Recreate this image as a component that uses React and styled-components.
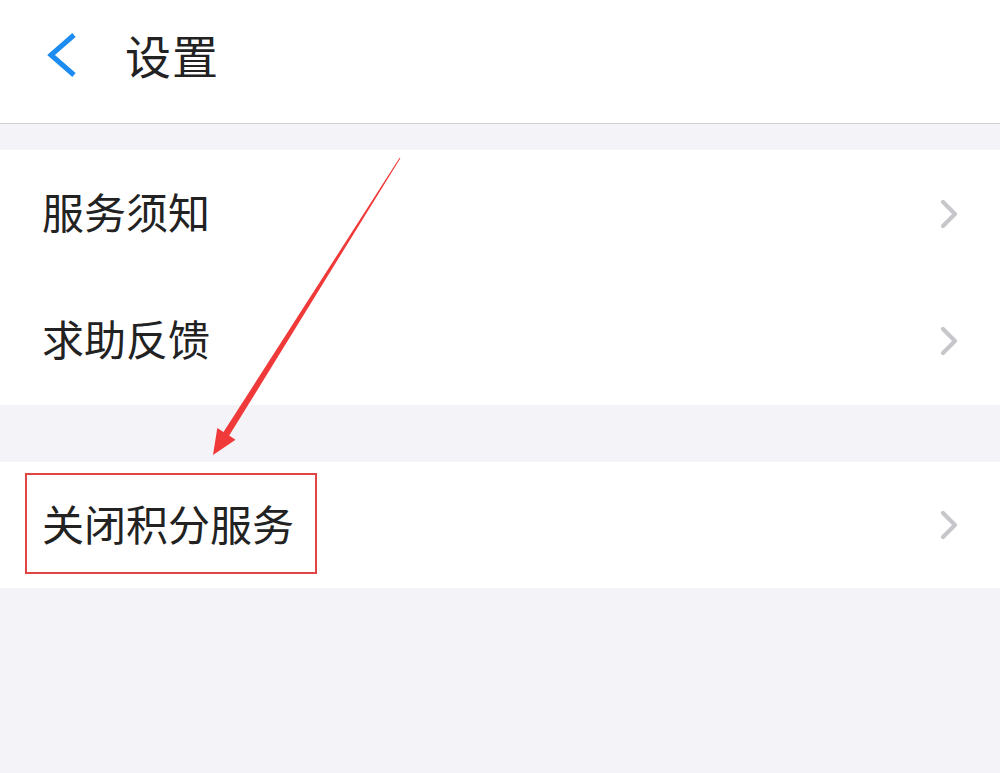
import React from 'react';
import styled, { createGlobalStyle } from 'styled-components';

const GlobalStyle = createGlobalStyle`
  html, body {
    margin: 0;
    padding: 0;
    background: #f3f3f8;
  }
  body {
    font-family: "Noto Sans CJK SC", "Noto Sans", sans-serif;
    color: #1e1e1e;
  }
`;

const Page = styled.div`
  position: relative;
  width: 1000px;
  min-height: 773px;
  background: #f3f3f8;
  overflow: hidden;
`;

const Header = styled.header`
  display: flex;
  align-items: center;
  height: 124px;
  padding: 0 0 0 45px;
  background: #fff;
  border-bottom: 1px solid #cfcfd4;
  box-sizing: border-box;
`;

const BackButton = styled.button`
  display: flex;
  align-items: center;
  padding: 0;
  margin: -14px 46px 0 0;
  border: none;
  background: none;
  cursor: pointer;
`;

const Title = styled.h1`
  margin: -16px 0 0;
  font-size: 46px;
  font-weight: 400;
  color: #222;
  letter-spacing: 1px;
`;

const Section = styled.section`
  background: #fff;
  margin-top: ${(p) => p.$gap}px;
`;

const Row = styled.div`
  display: flex;
  align-items: center;
  justify-content: space-between;
  height: ${(p) => p.$height || 128}px;
  padding: 0 40px 0 42px;
  cursor: pointer;
`;

const Label = styled.span`
  display: inline-flex;
  align-items: center;
  margin-top: -6px;
  font-size: 42px;
  line-height: 1;
  color: #222;
  ${(p) =>
    p.$highlight &&
    `
    height: 101px;
    margin: -4px 0 0 -17px;
    padding: 0 21px 0 15px;
    border: 2px solid #e04444;
    box-sizing: border-box;
  `}
`;

const Overlay = styled.svg`
  position: absolute;
  top: 0;
  left: 0;
  pointer-events: none;
`;

const Chevron = () => (
  <svg width="22" height="30" viewBox="0 0 22 30">
    <polyline
      points="5,3 17,15 5,27"
      fill="none"
      stroke="#c6c6cb"
      strokeWidth="4.2"
      strokeLinecap="round"
      strokeLinejoin="round"
    />
  </svg>
);

const BackIcon = () => (
  <svg width="34" height="48" viewBox="0 0 34 48">
    <polyline
      points="29,4 6,24 29,44"
      fill="none"
      stroke="#1d8cf0"
      strokeWidth="5"
      strokeLinecap="butt"
      strokeLinejoin="miter"
    />
  </svg>
);

export default function App() {
  return (
    <Page>
      <GlobalStyle />
      <Header>
        <BackButton aria-label="返回">
          <BackIcon />
        </BackButton>
        <Title>设置</Title>
      </Header>
      <Section $gap={26}>
        <Row $height={127}>
          <Label>服务须知</Label>
          <Chevron />
        </Row>
        <Row $height={128}>
          <Label>求助反馈</Label>
          <Chevron />
        </Row>
      </Section>
      <Section $gap={57}>
        <Row $height={126}>
          <Label $highlight>关闭积分服务</Label>
          <Chevron />
        </Row>
      </Section>
      <Overlay width="1000" height="773" viewBox="0 0 1000 773">
        <polygon
          points="400.4,158.2 229.2,435.6 235.5,439.8 213,455 217.3,428 223.5,432 399.6,157.8"
          fill="#f03a3a"
        />
      </Overlay>
    </Page>
  );
}
